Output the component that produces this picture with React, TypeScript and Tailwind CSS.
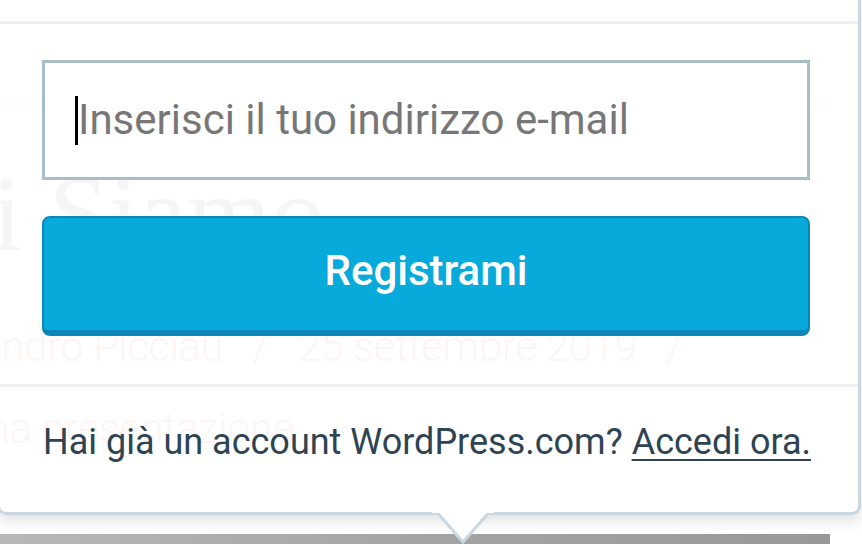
const POPUP_BORDER = 'border-[#c8d7e1]'

function PageBehind() {
  // faint blog page that shows through the popup
  return (
    <div className="flex flex-col pt-[100px]">
      <div className="h-[8px] w-[830px] bg-[#d9d9d9]" />
      <div className="mt-[52px] -ml-[134px] whitespace-nowrap text-[108px] leading-none text-[#3a3a3a] [font-family:'Liberation_Serif',serif]">
        Chi Siamo
      </div>
      <div className="mt-[58px] -ml-[118px] whitespace-nowrap text-[42px] leading-none text-[#c0392b] [font-family:Roboto,sans-serif] font-light tracking-[-0.5px]">
        Alessandro Picciau&nbsp;&nbsp;&nbsp;/&nbsp;&nbsp;&nbsp;25 settembre 2019&nbsp;&nbsp;&nbsp;/
      </div>
      <div className="mt-[40px] -ml-[92px] whitespace-nowrap text-[42px] leading-none text-[#c0392b] [font-family:Roboto,sans-serif] font-light tracking-[-0.5px]">
        Pagina presentazione
      </div>
      <div className="mt-[84px] h-[12px] w-[830px] bg-gradient-to-r from-[#b8b8b8] via-[#a4a4a4] to-[#989898]" />
    </div>
  )
}

function EmailField() {
  return (
    <div className="flex h-[120px] items-center border-[3px] border-[#a8bdca] bg-white pl-[30px]">
      <span className="h-[49px] w-[3px] bg-black" />
      <span className="text-[42px] leading-none text-[#777777]">Inserisci il tuo indirizzo e-mail</span>
    </div>
  )
}

function SignupPopup() {
  return (
    <div
      className={`absolute -left-[3px] top-0 flex h-[515px] w-[864px] flex-col rounded-b-[9px] border-[3px] border-t-0 ${POPUP_BORDER} bg-white/[0.95] shadow-[0_6px_14px_rgba(0,0,0,0.12)] [font-family:Roboto,sans-serif]`}
    >
      <div className="h-[21px]" />
      <div className="h-[3px] bg-[#eeeeee]" />
      <div className="flex flex-col gap-[36px] pl-[42px] pr-[48px] pt-[36px]">
        <EmailField />
        <button className="flex h-[120px] items-center justify-center rounded-[8px] border-2 border-b-[6px] border-[#0a87b6] bg-[#07aadb] pb-[6px] text-[42px] font-medium leading-none text-white">
          Registrami
        </button>
      </div>
      <div className="mt-[48px] h-[3px] bg-[#efefef]" />
      <div className="flex flex-1 items-center pb-[16px] pl-[43px] text-[36px] leading-none text-[#2e4453]">
        <span>
          Hai già un account WordPress.com?{' '}
          <a href="#" className="underline decoration-2 underline-offset-[5px]">
            Accedi ora.
          </a>
        </span>
      </div>
      <svg
        className="absolute left-[432px] top-[509px]"
        width="62"
        height="35"
        viewBox="0 0 62 35"
        aria-hidden="true"
      >
        <polygon points="2,0 31,33 60,0" fill="#ffffff" stroke="#c8d7e1" strokeWidth="3" />
        <rect x="0" y="0" width="62" height="4" fill="#ffffff" />
      </svg>
    </div>
  )
}

export default function App() {
  return (
    <div className="relative h-[544px] w-[862px] overflow-hidden bg-white">
      <PageBehind />
      <SignupPopup />
    </div>
  )
}
